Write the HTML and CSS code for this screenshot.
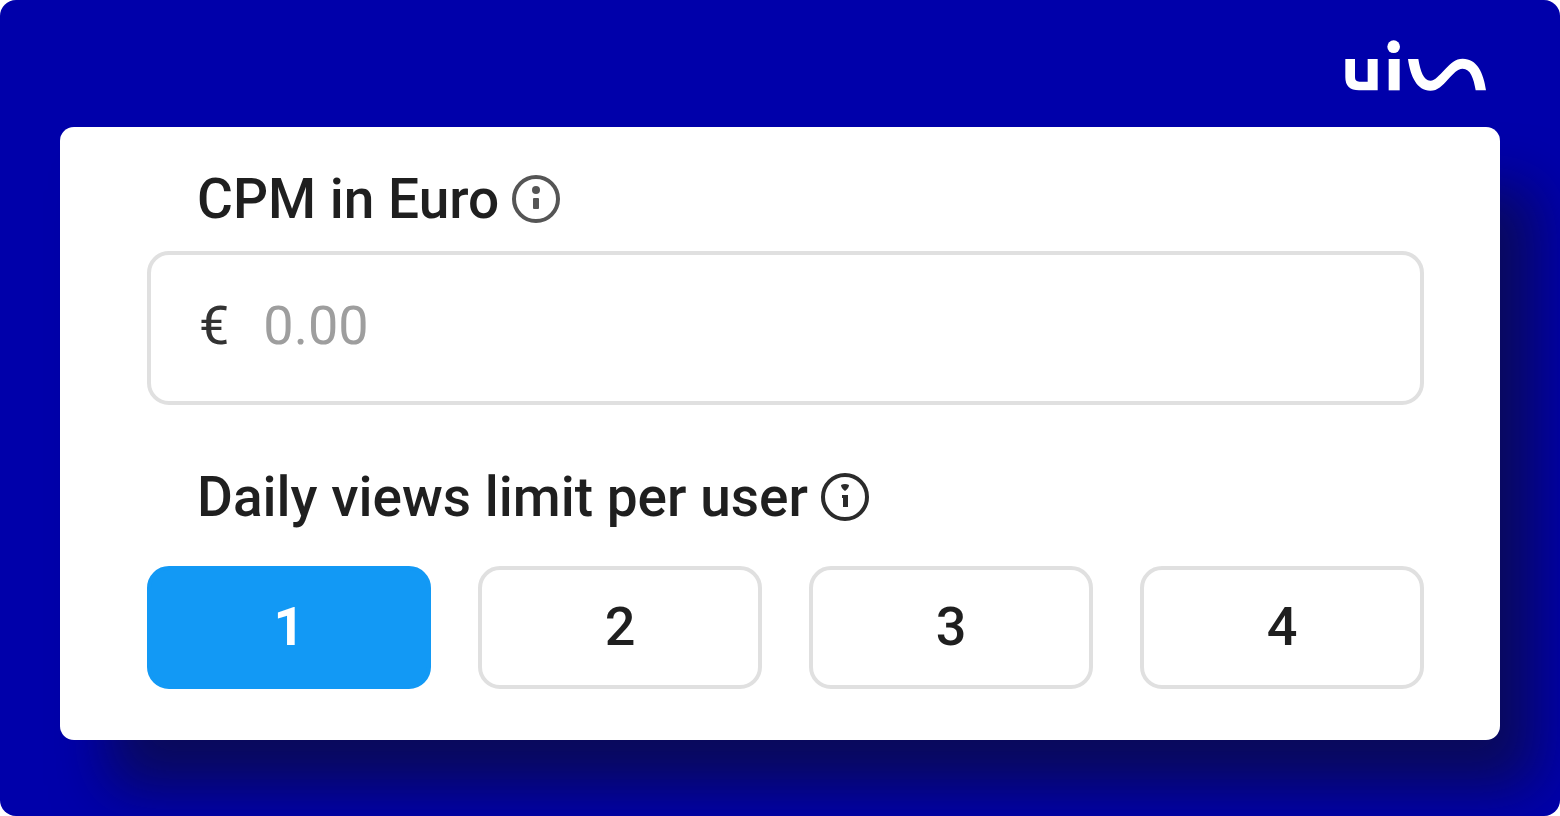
FILE: index.html
```html
<!DOCTYPE html>
<html lang="en">
<head>
    <meta charset="UTF-8">
    <meta name="viewport" content="width=device-width, initial-scale=1.0">
    <title>CPM in Euro</title>
    <link rel="stylesheet" href="styles.css">
</head>
<body>
    <div class="page">
        <header class="header">
            <svg class="logo" viewBox="44 31 426 156" role="img" aria-label="uin">
                <path d="M45 88H74V143Q74 156 87 156H112V88H142V182H86Q45 182 45 143Z"/>
                <path d="M175 88H208V182H175Z"/>
                <circle cx="190" cy="51" r="19"/>
                <path d="M233 88H264C270 125 280 153 300 153C315 153 325 138 345 118C362 100 375 87 397 87C440 87 460 130 467 182H436C430 145 420 117 397 117C380 117 370 132 352 150C336 168 322 183 300 183C260 183 240 140 233 88Z"/>
            </svg>
        </header>

        <main class="card">
            <!-- CPM -->
            <div class="label-row">
                <label for="cpm">CPM in Euro</label>
                <svg class="info info-soft" viewBox="0 0 50 50" aria-hidden="true">
                    <circle class="ring" cx="25" cy="25" r="22"/>
                    <circle cx="25" cy="16" r="4"/>
                    <rect x="22" y="24" width="6" height="11" rx="1"/>
                </svg>
            </div>
            <div class="input-box">
                <span class="currency">€</span>
                <input type="text" id="cpm" inputmode="decimal" placeholder="0.00">
            </div>

            <!-- Daily views -->
            <div class="label-row views-row">
                <span id="views-label">Daily views limit per user</span>
                <svg class="info" viewBox="0 0 50 50" aria-hidden="true">
                    <circle class="ring" cx="25" cy="25" r="22"/>
                    <path d="M21 13Q25 11 29 13Q29 16 25 19Q21 16 21 13Z"/>
                    <path d="M22 23H28V35H23V26H22Z"/>
                </svg>
            </div>
            <div class="options" role="group" aria-labelledby="views-label">
                <button type="button" class="option active" aria-pressed="true">1</button>
                <button type="button" class="option" aria-pressed="false">2</button>
                <button type="button" class="option" aria-pressed="false">3</button>
                <button type="button" class="option" aria-pressed="false">4</button>
            </div>
        </main>
    </div>
</body>
</html>
```
FILE: styles.css
```css
* {
    box-sizing: border-box;
}

body {
    margin: 0;
    background: #fff;
    color: #1f1f1f;
    font-family: Roboto, sans-serif;
}

.page {
    min-height: 100vh;
    padding: 40px 60px 76px;
    background: #0000aa;
    border-radius: 16px;
    overflow: hidden;
}

/* Logo */
.header {
    display: flex;
    justify-content: flex-end;
    padding: 0 13px 35px 0;
}

.logo {
    width: 142px;
    height: 52px;
    fill: #fff;
}

/* Card */
.card {
    padding: 42px 76px 51px 87px;
    background: #fff;
    border-radius: 14px;
    box-shadow: 42px 54px 56px -8px #0a0a5a;
}

.label-row {
    display: flex;
    align-items: center;
    gap: 12px;
    margin-bottom: 22px;
    padding-left: 50px;
    font-size: 55px;
    font-weight: 500;
    line-height: 60px;
}

.views-row {
    margin: 62px 0 39px;
}

.info {
    width: 50px;
    height: 50px;
    fill: #2b2b2b;
}

.info-soft {
    fill: #555;
}

.ring {
    fill: none;
    stroke: #2b2b2b;
    stroke-width: 4;
}

.info-soft .ring {
    stroke: #555;
}

/* Amount field */
.input-box {
    display: flex;
    align-items: center;
    gap: 34px;
    height: 154px;
    padding: 0 48px 6px;
    border: 4px solid #e0e0e0;
    border-radius: 22px;
    font-size: 54px;
}

.currency {
    color: #333;
}

.input-box input {
    flex: 1;
    min-width: 0;
    padding: 0;
    border: none;
    outline: none;
    background: transparent;
    color: #1f1f1f;
    font: inherit;
}

.input-box input::placeholder {
    color: #9e9e9e;
    opacity: 1;
}

/* Options */
.options {
    display: grid;
    grid-template-columns: repeat(4, 1fr);
    gap: 47px;
}

.option {
    height: 123px;
    padding: 0 0 2px;
    border: 4px solid #e0e0e0;
    border-radius: 22px;
    background: #fff;
    color: #1f1f1f;
    font: 500 54px/60px Roboto, sans-serif;
    cursor: pointer;
}

.option.active {
    border-color: #1299f5;
    background: #1299f5;
    color: #fff;
    font-weight: 700;
}
```
